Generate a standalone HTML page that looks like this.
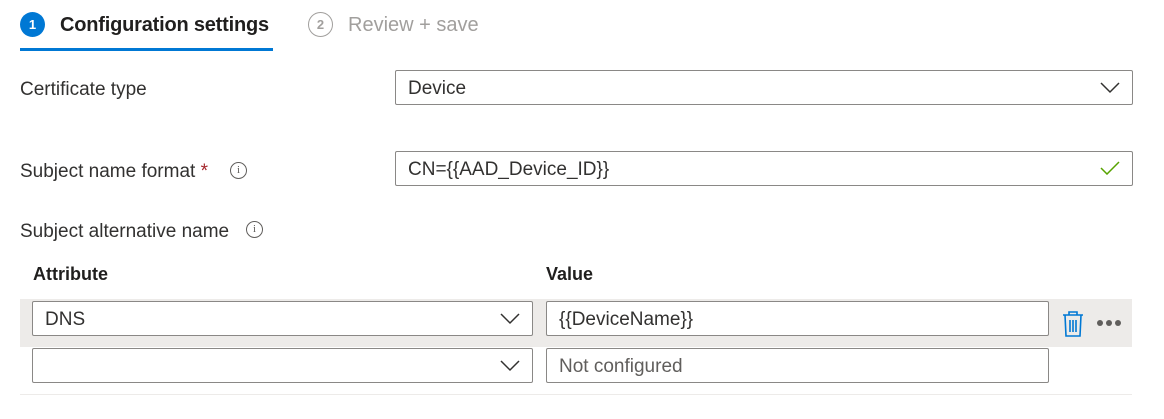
<!DOCTYPE html>
<html><head><style>
body{margin:0;width:1164px;height:419px;background:#fff;font-family:"Liberation Sans",sans-serif;color:#323130;position:relative;overflow:hidden}
.a{position:absolute}
.t{font-size:19px;white-space:nowrap}
.box{position:absolute;border:1px solid #8a8886;border-radius:2px;box-sizing:border-box;background:#fff;font-size:19px;padding-left:12px;padding-top:2px;display:flex;align-items:center}
.info{position:absolute;width:15px;height:15px;border:1px solid #605e5c;border-radius:50%;font-size:11px;text-align:center;line-height:15px;color:#605e5c;font-family:"Liberation Serif",serif}
.chev{position:absolute;right:12px;top:50%;margin-top:-6px}
</style></head><body>
<div class="a" style="left:20px;top:12px;width:25px;height:25px;border-radius:50%;background:#0078d4;color:#fff;font-size:13px;font-weight:bold;text-align:center;line-height:25px">1</div>
<div class="a t" style="left:60px;top:14px;font-size:20px;font-weight:bold;color:#201f1e;letter-spacing:-0.2px">Configuration settings</div>
<div class="a" style="left:20px;top:48px;width:253px;height:3px;background:#0078d4"></div>
<div class="a" style="left:308px;top:12px;width:23px;height:23px;border-radius:50%;border:1px solid #a19f9d;color:#a19f9d;font-size:13px;font-weight:bold;text-align:center;line-height:23px">2</div>
<div class="a t" style="left:348px;top:14px;font-size:20px;color:#a19f9d">Review + save</div>

<div class="a t" style="left:20px;top:79px">Certificate type</div>
<div class="box" style="left:395px;top:70px;width:738px;height:35px">Device
<svg class="chev" width="20" height="12" viewBox="0 0 20 12"><path d="M1 1l9 9 9-9" fill="none" stroke="#323130" stroke-width="1.5"/></svg></div>

<div class="a t" style="left:20px;top:161px">Subject name format <span style="color:#a4262c">*</span></div>
<div class="info" style="left:230px;top:162px">i</div>
<div class="box" style="left:395px;top:151px;width:738px;height:35px">CN={{AAD_Device_ID}}
<svg class="chev" width="20" height="14" viewBox="0 0 20 14" style="margin-top:-8px"><path d="M1 7l6 6L19 1" fill="none" stroke="#57a300" stroke-width="1.5"/></svg></div>

<div class="a t" style="left:20px;top:221px">Subject alternative name</div>
<div class="info" style="left:246px;top:221px">i</div>

<div class="a t" style="left:33px;top:264px;font-weight:bold;color:#201f1e;font-size:18px">Attribute</div>
<div class="a t" style="left:546px;top:264px;font-weight:bold;color:#201f1e;font-size:18px">Value</div>

<div class="a" style="left:20px;top:299px;width:1112px;height:48px;background:#edebe9"></div>
<div class="box" style="left:32px;top:301px;width:501px;height:35px">DNS
<svg class="chev" width="20" height="12" viewBox="0 0 20 12"><path d="M1 1l9 9 9-9" fill="none" stroke="#323130" stroke-width="1.5"/></svg></div>
<div class="box" style="left:546px;top:301px;width:503px;height:35px">{{DeviceName}}</div>
<svg class="a" style="left:1062px;top:311px" width="22" height="26" viewBox="0 0 22 26"><path d="M1 4h20M7 4V1h8v3M3 4l1 21h14l1-21" fill="none" stroke="#0078d4" stroke-width="1.6"/><path d="M8 9v12M11 9v12M14 9v12" stroke="#0078d4" stroke-width="1.6"/></svg>
<div class="a" style="left:1097px;top:320px;width:6px;height:6px;border-radius:50%;background:#605e5c"></div>
<div class="a" style="left:1106px;top:320px;width:6px;height:6px;border-radius:50%;background:#605e5c"></div>
<div class="a" style="left:1115px;top:320px;width:6px;height:6px;border-radius:50%;background:#605e5c"></div>

<div class="box" style="left:32px;top:348px;width:501px;height:35px">
<svg class="chev" width="20" height="12" viewBox="0 0 20 12"><path d="M1 1l9 9 9-9" fill="none" stroke="#323130" stroke-width="1.5"/></svg></div>
<div class="box" style="left:546px;top:348px;width:503px;height:35px;color:#605e5c">Not configured</div>
<div class="a" style="left:20px;top:394px;width:1112px;height:1px;background:#edebe9"></div>
</body></html>
